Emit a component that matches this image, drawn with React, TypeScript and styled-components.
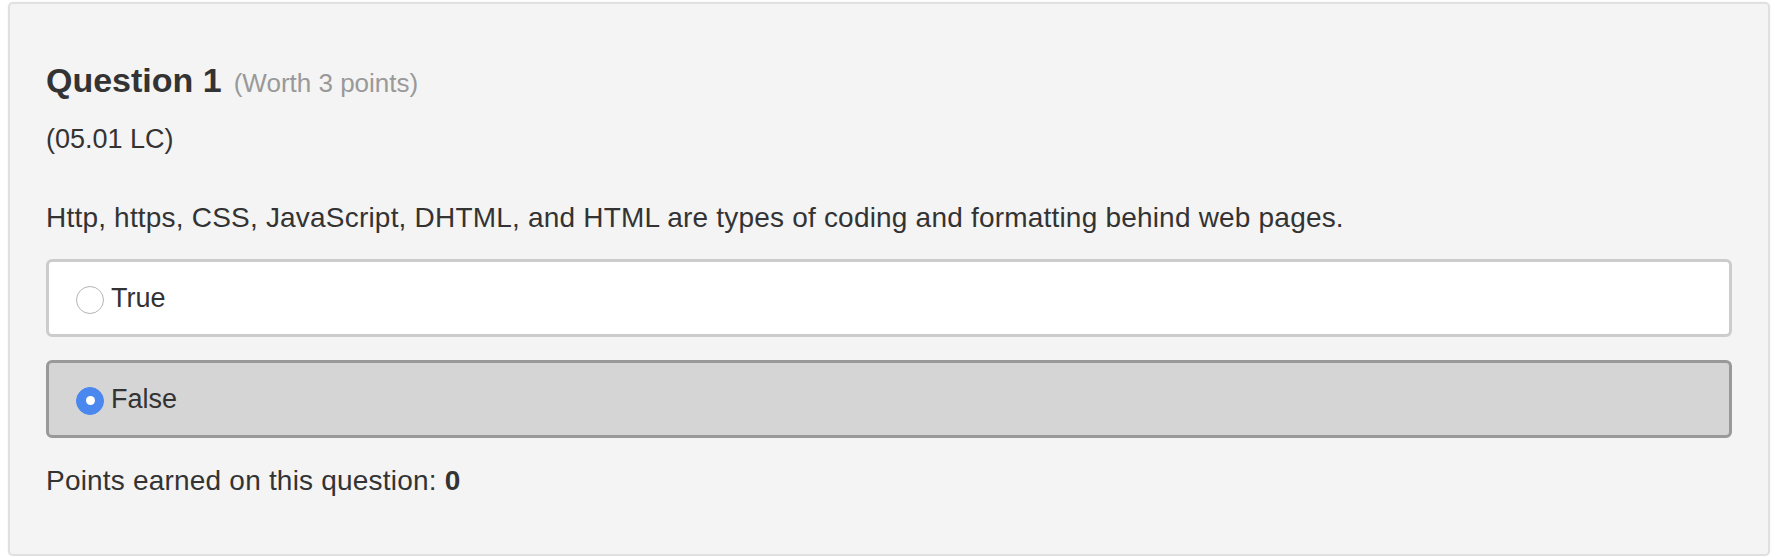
import React from 'react'
import styled, { createGlobalStyle } from 'styled-components'

const GlobalStyle = createGlobalStyle`
  html, body {
    margin: 0;
    padding: 0;
    background: #ffffff;
  }
  body {
    font-family: 'Liberation Sans', Arial, Helvetica, sans-serif;
    color: #333333;
  }
`

const Page = styled.div`
  display: flex;
  padding: 2px 15px 0 8px;
`

const Card = styled.div`
  flex: 1;
  background: #f4f4f4;
  border: 2px solid #e0e0e0;
  border-radius: 5px;
  box-shadow: 0 0 2px rgba(0, 0, 0, 0.08);
  padding: 56px 36px 55px 36px;
`

const Heading = styled.h2`
  margin: 0;
  font-size: 34px;
  line-height: 40px;
  font-weight: bold;
  color: #333333;
`

const Worth = styled.span`
  margin-left: 12px;
  font-size: 26px;
  line-height: 1;
  font-weight: normal;
  color: #999999;
`

const Text = styled.p<{ top: number; size: number }>`
  margin: ${(p) => p.top}px 0 0 0;
  font-size: ${(p) => p.size}px;
  line-height: 36px;
  letter-spacing: ${(p) => (p.size >= 28 ? '0.2px' : '0')};
`

const Choices = styled.div`
  display: flex;
  flex-direction: column;
  gap: 23px;
  margin-top: 23px;
`

const Choice = styled.label<{ selected?: boolean }>`
  display: flex;
  align-items: center;
  gap: 7px;
  padding: 18px 27px;
  border: 3px solid ${(p) => (p.selected ? '#999999' : '#cccccc')};
  border-radius: 6px;
  background: ${(p) => (p.selected ? '#d5d5d5' : '#ffffff')};
  font-size: 27px;
  line-height: 36px;
`

const Radio = styled.span<{ checked?: boolean }>`
  box-sizing: border-box;
  width: 28px;
  height: 28px;
  margin-top: 3px;
  border-radius: 50%;
  flex-shrink: 0;
  display: flex;
  align-items: center;
  justify-content: center;
  background: ${(p) => (p.checked ? '#4a88ef' : '#ffffff')};
  border: 1px solid ${(p) => (p.checked ? '#4a88ef' : '#b5b5b5')};
  &::after {
    content: '';
    display: ${(p) => (p.checked ? 'block' : 'none')};
    width: 9px;
    height: 9px;
    border-radius: 50%;
    background: #ffffff;
  }
`

const choices = [
  { label: 'True', selected: false },
  { label: 'False', selected: true },
]

export default function App() {
  return (
    <>
      <GlobalStyle />
      <Page>
        <Card>
          <Heading>
            Question 1<Worth>(Worth 3 points)</Worth>
          </Heading>
          <Text top={21} size={27}>
            (05.01 LC)
          </Text>
          <Text top={43} size={28}>
            Http, https, CSS, JavaScript, DHTML, and HTML are types of coding and formatting behind web pages.
          </Text>
          <Choices>
            {choices.map((c) => (
              <Choice key={c.label} selected={c.selected}>
                <Radio checked={c.selected} />
                {c.label}
              </Choice>
            ))}
          </Choices>
          <Text top={25} size={28}>
            Points earned on this question: <b>0</b>
          </Text>
        </Card>
      </Page>
    </>
  )
}
